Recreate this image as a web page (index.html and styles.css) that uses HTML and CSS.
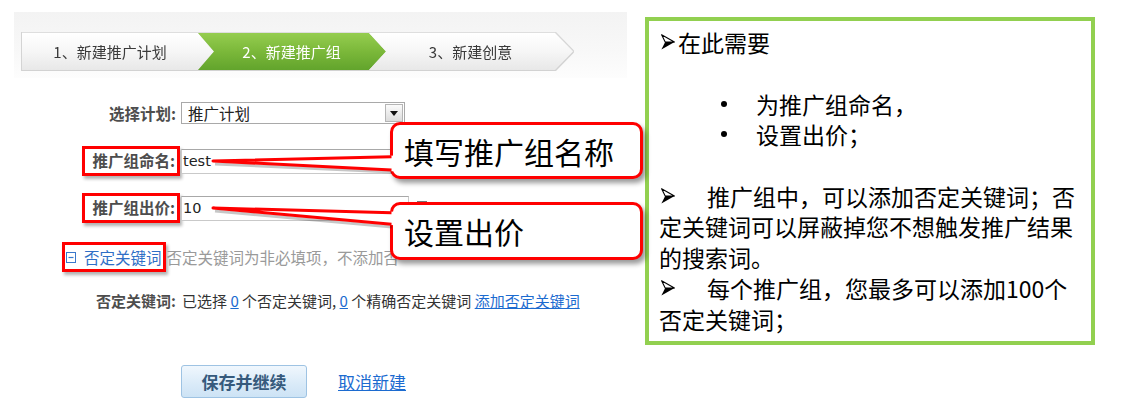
FILE: index.html
```html
<!DOCTYPE html>
<html lang="zh-CN">
<head>
<meta charset="utf-8">
<title>新建推广组</title>
<link rel="stylesheet" href="styles.css">
</head>
<body>
<div class="page">
  <div class="left">
    <div class="steps-band">
      <div class="steps">
        <div class="step step1">1、新建推广计划</div>
        <div class="step step2">2、新建推广组</div>
        <div class="step step3">3、新建创意</div>
      </div>
    </div>

    <div class="form">
      <div class="row row1">
        <div class="label-cell"><span class="label plain">选择计划:</span></div>
        <div class="select">
          <span class="select-text">推广计划</span>
          <span class="select-btn"><svg width="8" height="5" viewBox="0 0 8 5"><path d="M0 0H8L4 5Z" fill="#111"/></svg></span>
        </div>
      </div>
      <div class="row row2">
        <div class="label-cell"><span class="label hl">推广组命名:</span></div>
        <div class="input">test</div>
      </div>
      <div class="row row3">
        <div class="label-cell"><span class="label hl">推广组出价:</span></div>
        <div class="input input-price">10</div>
        <span class="help"></span>
      </div>
      <div class="row row4">
        <span class="neg-toggle">
          <svg class="minus" width="10" height="11" viewBox="0 0 10 11"><rect x="0.5" y="0.5" width="9" height="10" fill="none" stroke="#3a78cc"/><path d="M2.5 5.5H7.5" stroke="#3a78cc" stroke-width="1.2"/></svg>
          <span class="blue">否定关键词</span>
        </span>
        <span class="hint">否定关键词为非必填项，不添加否</span>
      </div>
      <div class="row row5">
        <div class="label-cell"><span class="label plain">否定关键词:</span></div>
        <div class="summary">已选择 <a class="link">0</a> 个否定关键词, <a class="link">0</a> 个精确否定关键词 <a class="link">添加否定关键词</a></div>
      </div>
      <div class="row actions">
        <span class="btn">保存并继续</span>
        <a class="link cancel">取消新建</a>
      </div>
    </div>
  </div>

  <div class="note">
    <div class="line"><svg class="arrow first" width="14" height="16" viewBox="0 0 14 16"><path d="M0.6 0.8L13.4 8H4.2Z" fill="#fff" stroke="#000" stroke-width="1.1" stroke-linejoin="round"/><path d="M4.2 8H13.6L0.4 15.4Z" fill="#000"/></svg>在此需要</div>
    <div class="line"></div>
    <div class="line bullet">为推广组命名，</div>
    <div class="line bullet">设置出价；</div>
    <div class="line"></div>
    <div class="line"><span class="lead"><svg class="arrow" width="14" height="16" viewBox="0 0 14 16"><path d="M0.6 0.8L13.4 8H4.2Z" fill="#fff" stroke="#000" stroke-width="1.1" stroke-linejoin="round"/><path d="M4.2 8H13.6L0.4 15.4Z" fill="#000"/></svg></span>推广组中，可以添加否定关键词；否</div>
    <div class="line">定关键词可以屏蔽掉您不想触发推广结果</div>
    <div class="line">的搜索词。</div>
    <div class="line"><span class="lead"><svg class="arrow" width="14" height="16" viewBox="0 0 14 16"><path d="M0.6 0.8L13.4 8H4.2Z" fill="#fff" stroke="#000" stroke-width="1.1" stroke-linejoin="round"/><path d="M4.2 8H13.6L0.4 15.4Z" fill="#000"/></svg></span>每个推广组，您最多可以添加100个</div>
    <div class="line">否定关键词；</div>
  </div>

  <div class="callout callout1">填写推广组名称</div>
  <svg class="wedge wedge1" width="190" height="28" viewBox="0 0 190 28">
    <polyline points="184,22 7,14" fill="none" stroke="rgba(0,0,0,0.22)" stroke-width="3"/>
    <polygon points="189,5.5 5,11 189,21.5" fill="#fff"/>
    <polyline points="183.5,6.7 5,11 183.5,20" fill="none" stroke="#f00" stroke-width="3" stroke-linejoin="round"/>
  </svg>
  <div class="callout callout2">设置出价</div>
  <svg class="wedge wedge2" width="190" height="32" viewBox="0 0 190 32">
    <polyline points="184,29 7,13" fill="none" stroke="rgba(0,0,0,0.22)" stroke-width="3"/>
    <polygon points="189,13.8 5,10 189,27.5" fill="#fff"/>
    <polyline points="183.5,14.8 5,10 183.5,26.3" fill="none" stroke="#f00" stroke-width="3" stroke-linejoin="round"/>
  </svg>
</div>
</body>
</html>
```

FILE: styles.css
```css
html, body {
  margin: 0;
  padding: 0;
  background: #fff;
}
body {
  width: 1122px;
  height: 410px;
  overflow: hidden;
  font-family: "Noto Sans CJK SC", "Noto Sans", sans-serif;
  color: #333;
}
.page {
  position: relative;
  display: flex;
  width: 1122px;
  height: 410px;
}
.left {
  width: 645px;
  flex: none;
}

/* steps */
.steps-band {
  margin: 12px 0 0 14px;
  width: 613px;
  height: 66px;
  box-sizing: border-box;
  padding: 21px 0 0 8px;
  background: linear-gradient(#f3f3f3, #f8f8f8 60%, #fdfdfd);
}
.steps {
  display: flex;
  height: 37px;
  filter: drop-shadow(0 1px 0 #d2d2d2) drop-shadow(0 -1px 0 #dedede) drop-shadow(1px 0 0 #d4d4d4) drop-shadow(-1px 0 0 #d4d4d4);
}
.step {
  height: 37px;
  display: flex;
  align-items: center;
  justify-content: center;
  box-sizing: border-box;
  font-size: 15px;
  color: #3a3a3a;
  white-space: nowrap;
  background: linear-gradient(#ffffff, #f6f6f6 50%, #e8e8e8);
}
.step1 {
  width: 192px;
  padding-right: 16px;
  clip-path: polygon(0 0, 176px 0, 100% 50%, 176px 100%, 0 100%);
}
.step2 {
  width: 188px;
  margin-left: -16px;
  padding: 0 17px 0 16px;
  color: #fff;
  background: linear-gradient(#95cd4f, #7bb83a 50%, #62a42c);
  clip-path: polygon(0 0, 171px 0, 100% 50%, 171px 100%, 0 100%, 16px 50%);
}
.step3 {
  width: 204px;
  margin-left: -17px;
  padding: 0 18px 0 17px;
  clip-path: polygon(0 0, 186px 0, 100% 50%, 186px 100%, 0 100%, 17px 50%);
}

/* form */
.form {
  padding-left: 70px;
  font-size: 15.5px;
}
.row {
  display: flex;
  align-items: center;
}
.label-cell {
  width: 111px;
  flex: none;
  display: flex;
  justify-content: flex-end;
}
.label {
  font-weight: bold;
  color: #4d4d4d;
  white-space: nowrap;
}
.label.plain {
  margin-right: 5px;
}
.label.hl {
  height: 30px;
  box-sizing: border-box;
  border: 3px solid #f00;
  padding: 0 2px 0 7px;
  line-height: 23px;
  margin-right: 1px;
  box-shadow: 2px 3px 3px rgba(0, 0, 0, 0.3);
}
.row1 {
  margin-top: 24px;
  height: 22px;
}
.select {
  width: 224px;
  height: 22px;
  box-sizing: border-box;
  border: 1px solid #a9a9a9;
  display: flex;
  align-items: center;
  padding-left: 6px;
  background: #fff;
}
.select-text {
  flex: 1;
  color: #222;
}
.select-btn {
  width: 18px;
  height: 18px;
  margin-right: 1px;
  box-sizing: border-box;
  border: 1px solid #b5b5b5;
  background: linear-gradient(#fbfbfb, #dcdcdc);
  display: flex;
  align-items: center;
  justify-content: center;
}
.row2 {
  margin-top: 22px;
  height: 30px;
}
.input {
  width: 228px;
  height: 25px;
  box-sizing: border-box;
  border: 1px solid #c9c9c9;
  border-top-color: #a8a8a8;
  padding-left: 1px;
  font-family: "DejaVu Sans", "Noto Sans", sans-serif;
  font-size: 14.5px;
  line-height: 22px;
  color: #222;
  background: #fff;
}
.row3 {
  margin-top: 17px;
  height: 30px;
}
.help {
  width: 10px;
  height: 14px;
  margin-left: 8px;
  background: #777;
}
.row4 {
  margin-top: 19px;
  margin-left: -8px;
  height: 30px;
}
.neg-toggle {
  height: 30px;
  box-sizing: border-box;
  border: 3px solid #f00;
  padding: 0 1px 0 1px;
  display: flex;
  align-items: center;
  box-shadow: 2px 3px 3px rgba(0, 0, 0, 0.3);
}
.minus {
  margin-right: 8px;
}
.blue {
  color: #2f6fc6;
  white-space: nowrap;
}
.hint {
  color: #9a9a9a;
  margin-left: 1px;
  white-space: nowrap;
}
.row5 {
  margin-top: 18px;
  height: 20px;
  font-size: 15px;
}
.summary {
  padding-left: 1px;
  white-space: nowrap;
  color: #333;
}
.link {
  color: #1c6bd0;
  text-decoration: underline;
}
.actions {
  margin-top: 55px;
  height: 33px;
  padding-left: 111px;
}
.btn {
  width: 126px;
  height: 33px;
  box-sizing: border-box;
  border: 1px solid #9ec3e3;
  border-radius: 3px;
  background: linear-gradient(#f0f7fd, #d9eaf8 60%, #cde3f5);
  display: flex;
  align-items: center;
  justify-content: center;
  font-weight: bold;
  font-size: 17px;
  color: #365a7c;
}
.cancel {
  margin-left: 31px;
  font-size: 17px;
}

/* note panel */
.note {
  margin-top: 17px;
  width: 450px;
  height: 328px;
  box-sizing: border-box;
  border: 4px solid #92d050;
  padding: 6px 0 0 10px;
  font-size: 23px;
  color: #000;
  flex: none;
}
.line {
  height: 30.7px;
  display: flex;
  align-items: center;
  white-space: nowrap;
}
.arrow {
  flex: none;
}
.arrow.first {
  margin: 0 3px 0 2px;
}
.lead {
  width: 48px;
  flex: none;
  display: flex;
  align-items: center;
}
.lead .arrow {
  margin-left: 2px;
}
.bullet::before {
  content: "";
  width: 6px;
  height: 6px;
  border-radius: 50%;
  background: #000;
  margin: 0 29px 0 62px;
  flex: none;
}

/* callouts */
.callout {
  position: absolute;
  left: 390px;
  width: 253px;
  box-sizing: border-box;
  border: 3px solid #f00;
  border-radius: 10px;
  background: #fff;
  box-shadow: 3px 4px 5px rgba(0, 0, 0, 0.4);
  display: flex;
  align-items: center;
  padding-left: 11px;
  font-size: 30px;
  color: #000;
  white-space: nowrap;
}
.callout1 {
  top: 122px;
  height: 57px;
}
.callout2 {
  top: 202px;
  height: 58px;
}
.wedge {
  position: absolute;
  left: 208px;
}
.wedge1 {
  top: 150px;
}
.wedge2 {
  top: 198px;
}
```
